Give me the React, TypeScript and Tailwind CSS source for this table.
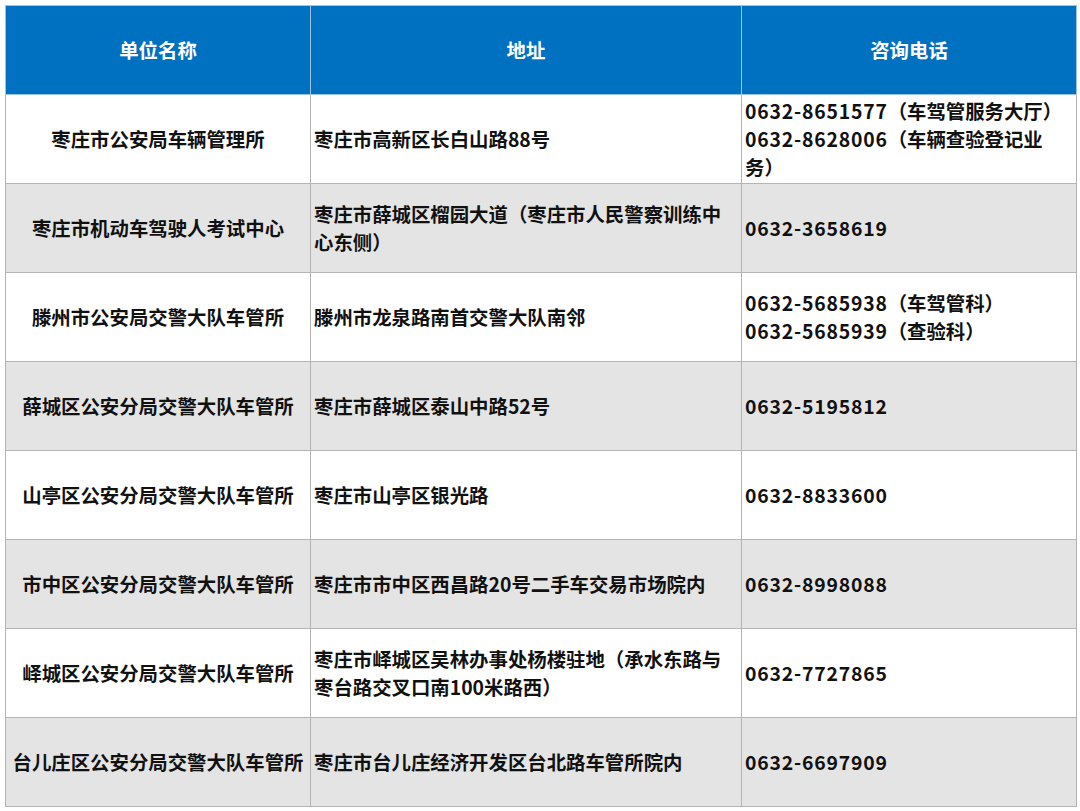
import React from 'react';

interface Row {
  name: string;
  address: string;
  phone: string[];
}

// phone lines are listed as they wrap in the original sheet
const rows: Row[] = [
  {
    name: '枣庄市公安局车辆管理所',
    address: '枣庄市高新区长白山路88号',
    phone: ['0632-8651577（车驾管服务大厅）', '0632-8628006（车辆查验登记业', '务）'],
  },
  {
    name: '枣庄市机动车驾驶人考试中心',
    address: '枣庄市薛城区榴园大道（枣庄市人民警察训练中心东侧）',
    phone: ['0632-3658619'],
  },
  {
    name: '滕州市公安局交警大队车管所',
    address: '滕州市龙泉路南首交警大队南邻',
    phone: ['0632-5685938（车驾管科）', '0632-5685939（查验科）'],
  },
  {
    name: '薛城区公安分局交警大队车管所',
    address: '枣庄市薛城区泰山中路52号',
    phone: ['0632-5195812'],
  },
  {
    name: '山亭区公安分局交警大队车管所',
    address: '枣庄市山亭区银光路',
    phone: ['0632-8833600'],
  },
  {
    name: '市中区公安分局交警大队车管所',
    address: '枣庄市市中区西昌路20号二手车交易市场院内',
    phone: ['0632-8998088'],
  },
  {
    name: '峄城区公安分局交警大队车管所',
    address: '枣庄市峄城区吴林办事处杨楼驻地（承水东路与枣台路交叉口南100米路西）',
    phone: ['0632-7727865'],
  },
  {
    name: '台儿庄区公安分局交警大队车管所',
    address: '枣庄市台儿庄经济开发区台北路车管所院内',
    phone: ['0632-6697909'],
  },
];

// number part gets a bit of tracking, the reference digits run wider
const renderPhone = (p: string) => {
  if (!/^\d/.test(p)) return p;
  const num = p.slice(0, 12);
  const rest = p.slice(12);
  return (
    <>
      <span className="tracking-[0.8px]">{num}</span>
      {rest}
    </>
  );
};

const App = () => {
  return (
    <div
      className="w-[1080px] h-[811px] bg-white pt-[5px] pl-[5px]"
      style={{ fontFamily: '"Noto Sans CJK SC", "Noto Sans", sans-serif' }}
    >
      <table className="table-fixed border-collapse w-[1071px] text-[19.4px] font-bold leading-[28px]">
        <colgroup>
          <col className="w-[305px]" />
          <col className="w-[431px]" />
          <col className="w-[335px]" />
        </colgroup>
        <thead>
          <tr className="h-[89px] bg-[#0070c0] text-white">
            <th className="border border-[#9dc3e6] font-bold">单位名称</th>
            <th className="border border-[#9dc3e6] font-bold">地址</th>
            <th className="border border-[#9dc3e6] font-bold">咨询电话</th>
          </tr>
        </thead>
        <tbody className="text-[#111]">
          {rows.map((row, i) => (
            <tr key={i} className={`h-[89px] ${i % 2 === 1 ? 'bg-[#e4e4e4]' : 'bg-white'}`}>
              <td className="border border-[#b4b4b4] text-center align-middle whitespace-nowrap">{row.name}</td>
              <td className="border border-[#b4b4b4] align-middle pl-[3px] pr-[7px]">{row.address}</td>
              <td className="border border-[#b4b4b4] align-middle pl-[3px] pr-[3px]">
                {row.phone.map((p, j) => (
                  <div key={j} className="whitespace-nowrap">{renderPhone(p)}</div>
                ))}
              </td>
            </tr>
          ))}
        </tbody>
      </table>
    </div>
  );
};

export default App;
